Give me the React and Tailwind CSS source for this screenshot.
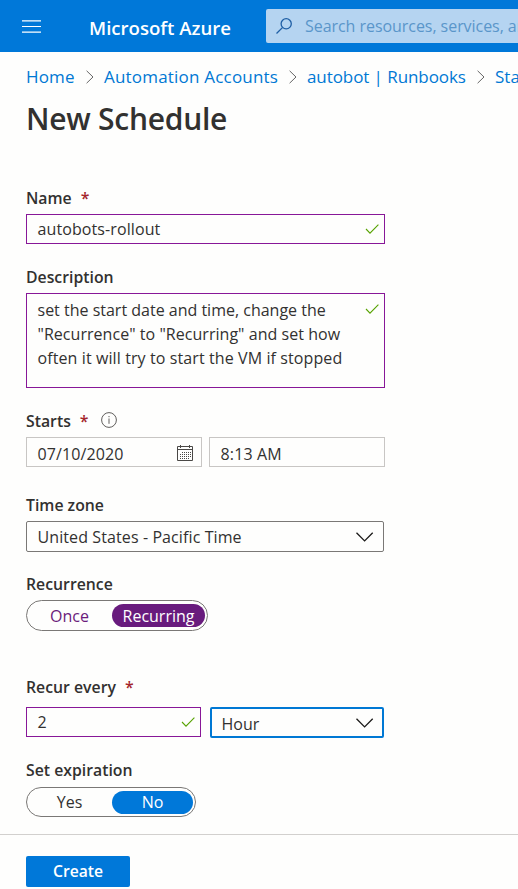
import React from "react";

function Check() {
  return (
    <svg className="h-[10px] w-[14px] shrink-0" viewBox="0 0 14 10" fill="none" stroke="#57a300" strokeWidth="1.1">
      <path d="M1 5 L5 9.1 L13.4 0.6" />
    </svg>
  );
}

function Chevron() {
  return (
    <svg className="h-[10px] w-[18px] shrink-0" viewBox="0 0 18 10" fill="none" stroke="#1b1a19" strokeWidth="1.3">
      <path d="M0.5 0.7 L8.6 8.9 L16.7 0.7" />
    </svg>
  );
}

function Crumb() {
  return (
    <svg className="h-[14px] w-[8px] shrink-0" viewBox="0 0 8 14" fill="none" stroke="#666" strokeWidth="1">
      <path d="M0.6 0.8 L7 7 L0.6 13.2" />
    </svg>
  );
}

function Calendar() {
  return (
    <svg className="mt-px h-[16px] w-[16px] shrink-0" viewBox="0 0 16 16" fill="none" stroke="#4a4846" strokeWidth="1">
      <path d="M0.5 1.5 H15.5 V15.5 H0.5 Z M0.5 4.5 H15.5 M3.5 0 V3 M12.5 0 V3" />
      <path d="M5 7.5 H14 M3 9.5 H14 M3 11.5 H14 M3 13.5 H12" strokeDasharray="1 1" />
    </svg>
  );
}

function Label({ children, required, info }) {
  return (
    <div className="flex h-8 items-center text-[15.8px] font-semibold whitespace-nowrap">
      <span>{children}</span>
      {required && <span className="ml-[9px] text-[#a4262c]">*</span>}
      {info && (
        <svg className="mb-[2px] ml-3 h-4 w-4" viewBox="0 0 16 16" fill="none" stroke="#605e5c">
          <circle cx="8" cy="8" r="7.4" />
          <path d="M8 6.5 V11.8 M8 4 V5.2" />
        </svg>
      )}
    </div>
  );
}

export default function App() {
  return (
    <div className="h-[889px] w-[518px] overflow-hidden bg-[#fefefd] font-['Open_Sans',sans-serif] text-[16px] leading-6 text-[#323130]">
      <header className="flex h-[52px] items-center bg-[#0078d9] pl-[22px]">
        <svg className="mt-px h-[13px] w-[19px] shrink-0" viewBox="0 0 19 13" stroke="#fff" strokeWidth="1.2">
          <path d="M0 0.8 H19 M0 6.5 H19 M0 12.2 H19" />
        </svg>
        <span className="ml-12 w-[177px] shrink-0 pt-[3px] text-[18.6px] font-semibold whitespace-nowrap text-white">Microsoft Azure</span>
        <div className="flex h-[34px] w-[260px] shrink-0 items-center rounded-l-[2px] bg-[#b5d4f1] pl-[10px]">
          <svg className="h-4 w-4 shrink-0" viewBox="0 0 16 16" fill="none" stroke="#1f5fa5" strokeWidth="1.3">
            <circle cx="10.2" cy="5.8" r="5.1" />
            <path d="M6.4 9.6 L0.5 15.5" />
          </svg>
          <span className="ml-[13px] text-[16px] tracking-[-0.05px] whitespace-nowrap text-[#5a96ca]">Search resources, services, and docs</span>
        </div>
      </header>

      <nav className="flex h-[49px] items-center pl-[26px] text-[17px] whitespace-nowrap text-[#0078d4]">
        <span className="w-[60px] shrink-0 tracking-[0.15px]">Home</span>
        <Crumb />
        <span className="ml-[10px] w-[185px] shrink-0 tracking-[0.2px]">Automation Accounts</span>
        <Crumb />
        <span className="ml-[10px] w-[170px] shrink-0 tracking-[-0.08px]">autobot | Runbooks</span>
        <Crumb />
        <span className="ml-[10px] shrink-0">Start Runbook</span>
      </nav>

      <main className="h-[733px] w-[385px] pl-[26px]">
        <h1 className="h-[81px] text-[30px] leading-9 font-semibold tracking-[-0.25px] whitespace-nowrap">New Schedule</h1>

        <Label required>Name</Label>
        <div className="flex h-[30px] items-center justify-between border border-[#881798] pr-[5px] pl-[10.5px]">
          <span className="pb-px tracking-[0.1px]">autobots-rollout</span>
          <Check />
        </div>

        <div className="pt-[17px]">
          <Label>Description</Label>
        </div>
        <div className="flex h-[95px] items-start justify-between border border-[#881798] pt-1 pr-[5px] pl-[10.5px]">
          <p className="whitespace-nowrap">
            set the start date and time, change the
            <br />
            <span className="tracking-[0.04px]">"Recurrence" to "Recurring" and set how</span>
            <br />
            <span className="tracking-[0.1px]">often it will try to start the VM if stopped</span>
          </p>
          <div className="pt-[6px]"><Check /></div>
        </div>

        <div className="pt-[17px]">
          <Label required info>Starts</Label>
        </div>
        <div className="flex gap-[7px]">
          <div className="flex h-[30px] w-[176px] items-center justify-between border border-[#c8c6c4] pr-2 pl-[10.5px]">
            <span className="pt-[3px] tracking-[0.1px]">07/10/2020</span>
            <Calendar />
          </div>
          <div className="flex h-[30px] w-[176px] items-center border border-[#c8c6c4] pl-[10.5px]">
            <span className="pt-[3px] tracking-[0.15px]">8:13 AM</span>
          </div>
        </div>

        <div className="pt-[22px]">
          <Label>Time zone</Label>
        </div>
        <div className="flex h-[31px] w-[358px] items-center justify-between rounded-[2px] border border-[#7a7876] pr-[9px] pl-[10.5px]">
          <span className="pt-px tracking-[0.1px]">United States - Pacific Time</span>
          <Chevron />
        </div>

        <div className="pt-4">
          <Label>Recurrence</Label>
        </div>
        <div className="flex h-[31px] w-[182px] items-center rounded-full border border-[#7a7876]">
          <span className="w-[85px] text-center text-[#6b1c7b]">Once</span>
          <span className="h-[23px] w-[93px] rounded-full bg-[#681b7d] text-center text-white">Recurring</span>
        </div>

        <div className="pt-[40px]">
          <Label required>Recur every</Label>
        </div>
        <div className="flex pt-1">
          <div className="flex h-[30px] w-[175px] items-center justify-between border border-[#881798] pr-[5px] pl-[10.5px]">
            <span className="pb-px">2</span>
            <Check />
          </div>
          <div className="ml-[9px] flex h-[31px] w-[174px] items-center justify-between rounded-[2px] border-2 border-[#0078d4] pr-2 pl-[9.5px]">
            <span className="pt-[2px]">Hour</span>
            <Chevron />
          </div>
        </div>

        <div className="pt-4 pb-px">
          <Label>Set expiration</Label>
        </div>
        <div className="flex h-[30px] w-[170px] items-center rounded-full border border-[#7a7876]">
          <span className="w-[85px] pb-px text-center">Yes</span>
          <span className="h-[23px] w-[81px] rounded-full bg-[#0078d9] text-center leading-[22px] text-white">No</span>
        </div>
      </main>

      <footer className="h-[55px] border-t border-[#d2d0ce] pt-[21px] pl-[26px]">
        <button className="h-[31px] w-[104px] rounded-[2px] bg-[#0078d9] pb-[2px] text-[15.7px] font-semibold text-white">Create</button>
      </footer>
    </div>
  );
}
